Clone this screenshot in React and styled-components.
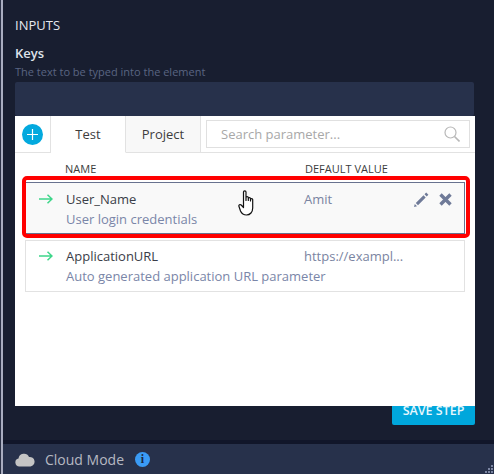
import React from "react";
import styled, { createGlobalStyle } from "styled-components";

const Global = createGlobalStyle`
  html, body { margin: 0; padding: 0; }
  body { width: 494px; height: 474px; overflow: hidden; background: #2b3146; font-family: "Open Sans", "Noto Sans", sans-serif; }
  * { box-sizing: border-box; }
`;

const Page = styled.div`
  width: 493px; height: 474px; margin-left: 1px; display: flex; flex-direction: column;
  border-left: 2px solid #a9adc0; position: relative; background: #181e30;
`;
const Body = styled.div`
  flex: 1; min-height: 0; padding: 17px 19px 0 12px; position: relative;
`;
const SectionTitle = styled.div`
  font-size: 13px; line-height: 16px; font-weight: 400; color: #e6e8ee;
`;
const FieldLabel = styled.div`
  margin-top: 12px; font-size: 13px; line-height: 16px; font-weight: 600; color: #dfe2ea;
`;
const Hint = styled.div`
  margin-top: 4px; font-size: 11px; line-height: 14px; color: #5a6582;
`;
const KeyInput = styled.div`
  margin-top: 3px; height: 34px; width: 459px; background: #27314b; border-radius: 2px;
`;
const SaveRow = styled.div`
  position: absolute; right: 19px; top: 385px;
`;
const SaveButton = styled.button`
  width: 83px; height: 40px; border: 0; border-radius: 2px; background: #00a7dc; color: #e8f7fc;
  font: 600 12.5px "Open Sans", sans-serif; padding: 10px 0 0; text-transform: uppercase;
`;
const Popup = styled.div`
  position: absolute; left: 12px; top: 116px; width: 460px; height: 290px; background: #fff;
`;
const TabBar = styled.div`
  display: flex; height: 37px;
`;
const AddCell = styled.div`
  width: 36px; height: 37px; border-right: 1px solid #e2e2e2; border-bottom: 1px solid #e2e2e2;
  display: flex; align-items: center; padding-left: 7px;
`;
const AddCircle = styled.div`
  width: 21px; height: 21px; border-radius: 50%; background: #03a9de;
  display: flex; align-items: center; justify-content: center;
`;
const Tab = styled.div`
  width: 75px; height: 37px; display: flex; align-items: center; justify-content: center;
  font-size: 13px; color: #3d3d3d;
  border-right: 1px solid #e2e2e2;
  border-bottom: 1px solid ${p => (p.$active ? "#fff" : "#e2e2e2")};
  background: ${p => (p.$active ? "#fff" : "#f8f8f8")};
`;
const SearchCell = styled.div`
  flex: 1; height: 37px; border-bottom: 1px solid #e2e2e2; padding: 4px 5px;
`;
const SearchBox = styled.div`
  height: 28px; border: 1px solid #e0e0e0; display: flex; align-items: center;
  justify-content: space-between; padding: 0 9px 0 14px; font-size: 13px; color: #a8a8a8;
`;
const HeaderRow = styled.div`
  display: flex; height: 29px; padding: 8px 0 0 50px; font-size: 11px; line-height: 15px; color: #3c3c3c;
`;
const NameHead = styled.div` width: 240px; `;
const Rows = styled.div`
  padding: 0 10px; display: flex; flex-direction: column; gap: 6px;
`;
const Row = styled.div`
  position: relative; height: 52px; display: grid; grid-template-columns: 40px 238px 1fr;
  grid-template-rows: 20px 20px; padding-top: ${p => (p.$active ? "6px" : "5px")};
  border: 1px solid ${p => (p.$active ? "#68728f" : "#e2e2e2")};
  background: ${p => (p.$active ? "#f9f9f9" : "#fff")};
`;
const ArrowCell = styled.div` padding: 5px 0 0 13px; line-height: 0; `;
const ParamName = styled.div`
  font-size: 13px; line-height: 20px; color: #3a3d48;
`;
const ParamValue = styled.div`
  font-size: 13px; line-height: 20px; color: #7a84a1; white-space: nowrap;
`;
const ParamDesc = styled.div`
  grid-column: 2 / 4; font-size: 13px; line-height: 20px; color: #7a86a8; white-space: nowrap;
`;
const Actions = styled.div`
  position: absolute; right: 12px; top: 9px; display: flex; gap: 10px; align-items: center;
`;
const Highlight = styled.div`
  position: absolute; left: 7px; top: 60px; width: 448px; height: 62px;
  border: 4px solid #f00; border-radius: 5px; pointer-events: none;
`;
const Cursor = styled.svg`
  position: absolute; left: 223px; top: 74px;
`;
const Footer = styled.div`
  height: 34px; border-top: 4px solid #11162a; background: #27314b; display: flex;
  align-items: center; padding: 0 0 0 12px; position: relative; color: #b6b9c2; font-size: 14px;
`;
const FooterLabel = styled.span` margin-left: 10px; `;
const InfoDot = styled.span`
  margin-left: 11px; width: 15px; height: 15px; border-radius: 50%; background: #3a9bf5; color: #1b2540;
  display: flex; align-items: center; justify-content: center;
  font: 700 12px "Liberation Serif", serif;
`;
const Grip = styled.svg`
  position: absolute; right: 0; bottom: 0;
`;

const Arrow = () => (
  <svg width="14" height="10" viewBox="0 0 14 10" fill="none" stroke="#3ed68a" strokeWidth="1.5">
    <path d="M0 5h13M8.500.7L13 5l-4.500 4.300" />
  </svg>
);

export default function App() {
  return (
    <>
      <Global />
      <Page>
        <Body>
          <SectionTitle>INPUTS</SectionTitle>
          <FieldLabel>Keys</FieldLabel>
          <Hint>The text to be typed into the element</Hint>
          <KeyInput />
          <SaveRow><SaveButton>Save Step</SaveButton></SaveRow>
          <Popup>
            <TabBar>
              <AddCell>
                <AddCircle>
                  <svg width="11" height="11" viewBox="0 0 11 11" stroke="#fff" strokeWidth="1.2"><path d="M5.500 0v11M0 5.500h11" /></svg>
                </AddCircle>
              </AddCell>
              <Tab $active>Test</Tab>
              <Tab>Project</Tab>
              <SearchCell>
                <SearchBox>
                  Search parameter...
                  <svg width="16" height="16" viewBox="0 0 16 16" fill="none" stroke="#b8b8b8" strokeWidth="1.2">
                    <circle cx="6.500" cy="6.500" r="5.500" /><path d="M10.500 10.500l5 5" strokeWidth="1.600" />
                  </svg>
                </SearchBox>
              </SearchCell>
            </TabBar>
            <HeaderRow><NameHead>NAME</NameHead><div>DEFAULT VALUE</div></HeaderRow>
            <Rows>
              <Row $active>
                <ArrowCell><Arrow /></ArrowCell>
                <ParamName>User_Name</ParamName>
                <ParamValue>Amit</ParamValue>
                <div />
                <ParamDesc>User login credentials</ParamDesc>
                <Actions>
                  <svg width="15" height="15" viewBox="0 0 15 15" fill="#6f7a98">
                    <path d="M0 15l.8-3 2.200 2.200zM1.800 11L9.500 3.300l2.200 2.200L4 13.200zM10.500 2.300l1.700-1.700 2.200 2.200-1.700 1.700z" />
                  </svg>
                  <svg width="13" height="13" viewBox="0 0 13 13" stroke="#6f7a98" strokeWidth="3.400"><path d="M1.500 1.500l10 10M11.500 1.500l-10 10" /></svg>
                </Actions>
              </Row>
              <Row>
                <ArrowCell><Arrow /></ArrowCell>
                <ParamName>ApplicationURL</ParamName>
                <ParamValue>https://exampl...</ParamValue>
                <div />
                <ParamDesc>Auto generated application URL parameter</ParamDesc>
              </Row>
            </Rows>
            <Highlight />
            <Cursor width="19" height="26" viewBox="0 0 19 26" fill="#fff" stroke="#111" strokeWidth="1.200" strokeLinejoin="round">
              <path d="M5.500 2c0-1.600 2.500-1.600 2.500 0v8.500V7.500c0-1.200 2.300-1.200 2.300 0v3-2c0-1.200 2.200-1.200 2.200 0v2.500-1.500c0-1.200 2.200-1.200 2.200 0V18c0 4-2.500 7-6.200 7-3.500 0-5-1.800-6-4L1 16.500c-.6-1.500 1-2.500 2.200-1.500l2.300 2.500z" />
            </Cursor>
          </Popup>
        </Body>
        <Footer>
          <svg width="20" height="15" viewBox="0 0 20 15" fill="#c4c4c4"><path d="M4.500 14.500A4 4 0 0 1 3.500 6.600 5.500 5.500 0 0 1 14 5a4.800 4.800 0 0 1 1.500 9.500z" /></svg>
          <FooterLabel>Cloud Mode</FooterLabel>
          <InfoDot>i</InfoDot>
          <Grip width="9" height="9" viewBox="0 0 9 9" fill="#7a84a1">
            <path d="M6 0h2v2H6zM3 3h2v2H3zM6 3h2v2H6zM0 6h2v2H0zM3 6h2v2H3zM6 6h2v2H6z" />
          </Grip>
        </Footer>
      </Page>
    </>
  );
}
